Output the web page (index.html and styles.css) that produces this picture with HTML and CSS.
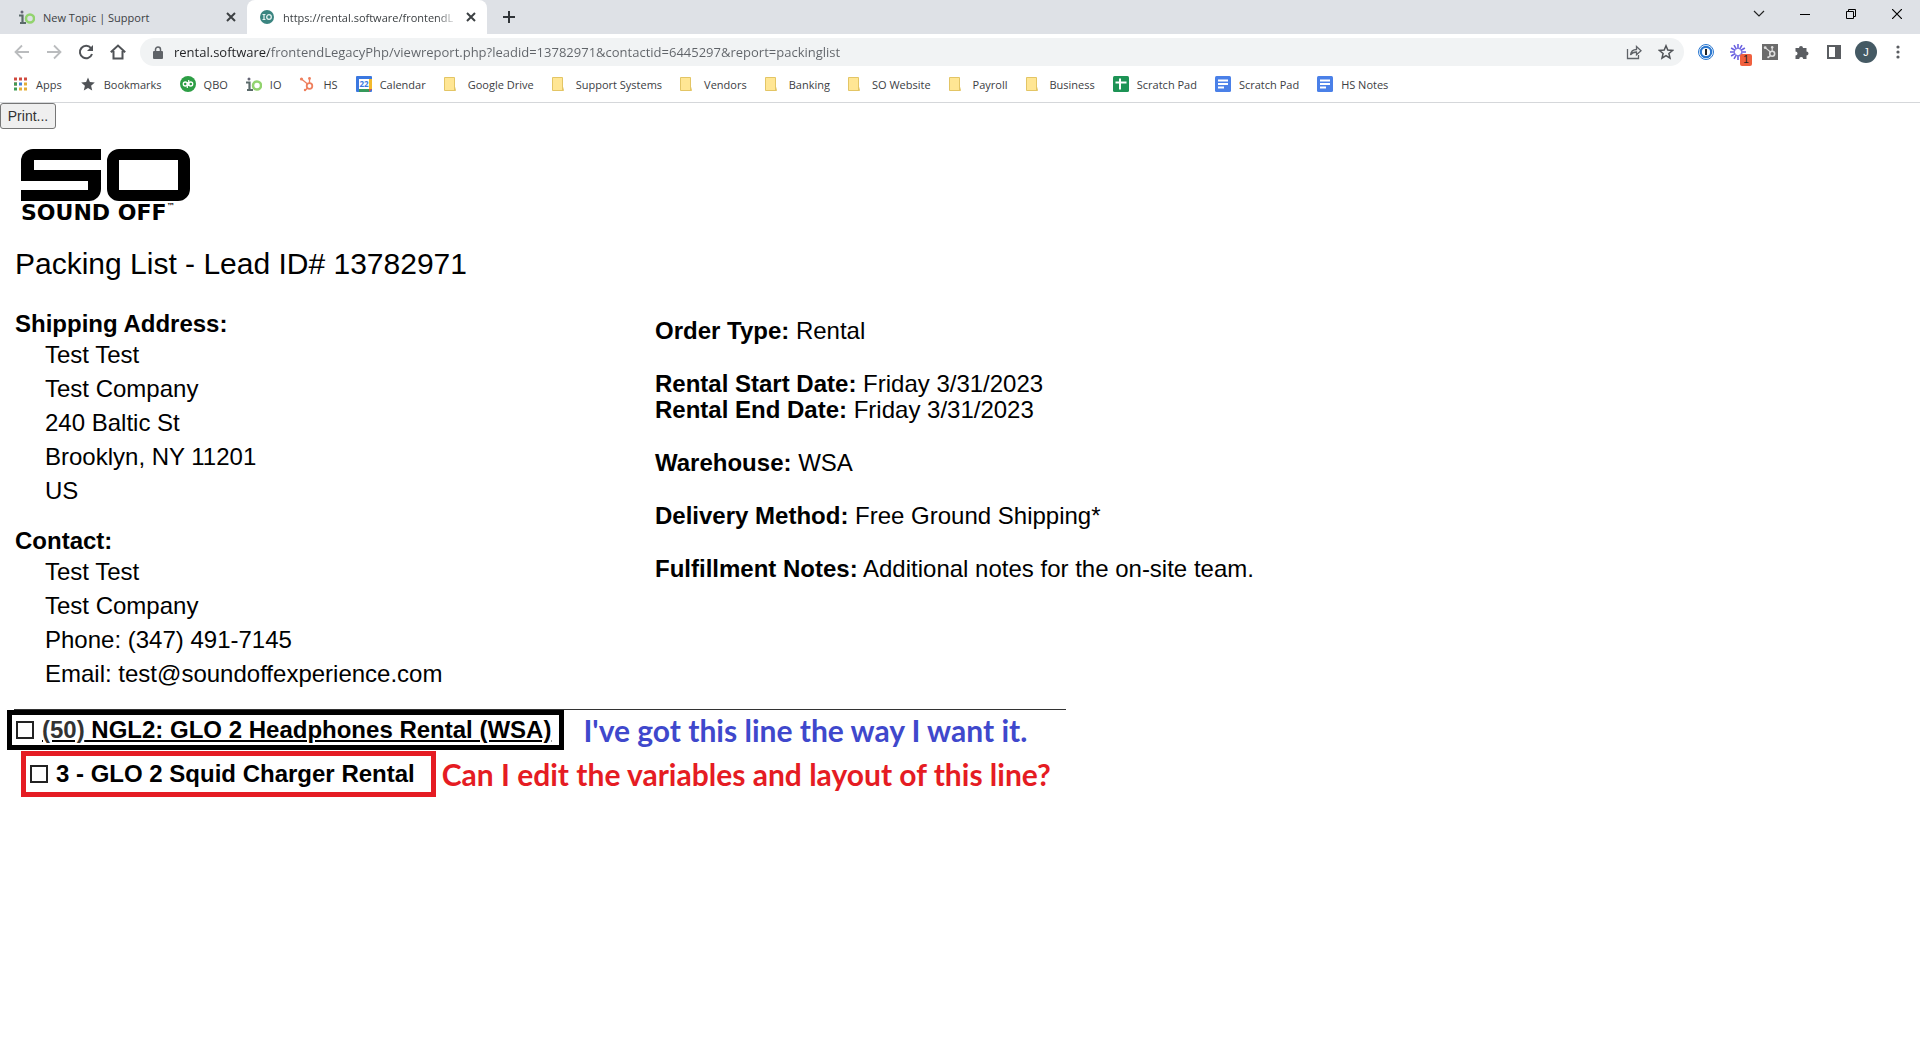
FILE: index.html
```html
<!DOCTYPE html>
<html lang="en">
<head>
    <meta charset="UTF-8">
    <meta name="viewport" content="width=device-width, initial-scale=1.0">
    <title>Packing List</title>
    <link rel="stylesheet" href="styles.css">
</head>
<body>

<!-- Shared icons -->
<svg class="sprite" aria-hidden="true">
    <symbol id="close" viewBox="0 0 10 10"><path d="M1 1l8 8M9 1l-8 8" stroke="#3c4043" stroke-width="2"/></symbol>
    <symbol id="io" viewBox="0 0 16 16">
        <circle cx="3" cy="3" r="1.500" fill="#667"/>
        <path d="M0 6.500h3.500v7.500M1 14h6" fill="none" stroke="#5b6a6a" stroke-width="2.200"/>
        <circle cx="11" cy="9.500" r="4" fill="none" stroke="#92d36e" stroke-width="2.500"/>
    </symbol>
    <symbol id="folder" viewBox="0 0 16 16">
        <path d="M.5 1.500h10v9l1 4H.5z" fill="#ffe694" stroke="#e3c565"/>
        <path d="M10.500 10v4.500" stroke="#e3c565"/>
    </symbol>
    <symbol id="doc" viewBox="0 0 16 16">
        <rect width="16" height="16" rx="1.500" fill="#4a80e8"/>
        <path d="M3 4.500h10M3 8h10M3 11.500h6" stroke="#fff" stroke-width="1.800"/>
    </symbol>
    <symbol id="sprocket" viewBox="0 0 16 16">
        <circle cx="10.500" cy="10" r="2.800" fill="none" stroke="currentColor" stroke-width="1.800"/>
        <path d="M10.500 7V2.500M8.500 8L2.500 3M8.500 12l-2.500 2.500" stroke="currentColor" stroke-width="1.300"/>
        <circle cx="10.500" cy="2.500" r="1.400" fill="currentColor"/>
        <circle cx="2.500" cy="3" r="1.600" fill="currentColor"/>
        <circle cx="6" cy="14" r="1.200" fill="currentColor"/>
    </symbol>
</svg>

<header class="browser">
    <!-- Tabs -->
    <div class="tab-strip">
        <div class="tab">
            <svg class="icon"><use href="#io"/></svg>
            <span class="tab-title">New Topic | Support</span>
            <button class="tab-close" aria-label="Close tab"><svg width="10" height="10"><use href="#close"/></svg></button>
        </div>
        <div class="tab active">
            <svg class="icon" viewBox="0 0 16 16">
                <circle cx="8" cy="8" r="7" fill="#3b8580"/>
                <path d="M3.500 5.500h3M5 5.500v5M3.500 10.500h3" stroke="#e6f3f1" stroke-width="1.200"/>
                <circle cx="10" cy="8" r="2.300" fill="none" stroke="#e6f3f1" stroke-width="1.300"/>
            </svg>
            <span class="tab-title fade">https://rental.software/frontendL</span>
            <button class="tab-close" aria-label="Close tab"><svg width="10" height="10"><use href="#close"/></svg></button>
        </div>
        <button class="new-tab" aria-label="New tab"><svg width="12" height="12" viewBox="0 0 12 12"><path d="M6 0v12M0 6h12" stroke="#303438" stroke-width="2"/></svg></button>
        <div class="window-controls">
            <button aria-label="Search tabs"><svg width="12" height="12" viewBox="0 0 12 12"><path d="M1 3l5 5 5-5" fill="none" stroke="#222" stroke-width="1.200"/></svg></button>
            <button aria-label="Minimize"><svg width="10" height="10" viewBox="0 0 10 10"><path d="M0 5.500h10" stroke="#000"/></svg></button>
            <button aria-label="Restore"><svg width="10" height="10" viewBox="0 0 10 10"><path d="M.5 2.500h7v7h-7zM2.500 2.500v-2h7v7h-2" fill="none" stroke="#000"/></svg></button>
            <button aria-label="Close window"><svg width="10" height="10" viewBox="0 0 10 10"><path d="M0 0l10 10M10 0L0 10" stroke="#000" stroke-width="1.200"/></svg></button>
        </div>
    </div>

    <!-- Address bar -->
    <div class="toolbar">
        <div class="nav">
            <button aria-label="Back"><svg class="icon" viewBox="0 0 16 16"><path d="M15 8H2M8 1.500L1.500 8 8 14.500" fill="none" stroke="#babcbe" stroke-width="1.800"/></svg></button>
            <button aria-label="Forward"><svg class="icon" viewBox="0 0 16 16"><path d="M1 8h13M8 1.500L14.500 8 8 14.500" fill="none" stroke="#babcbe" stroke-width="1.800"/></svg></button>
            <button aria-label="Reload"><svg class="icon" viewBox="0 0 16 16"><path d="M13 4.200A6.200 6.200 0 1 0 14 10" fill="none" stroke="#505357" stroke-width="2"/><path d="M15 1v6H9z" fill="#505357"/></svg></button>
            <button aria-label="Home"><svg class="icon" viewBox="0 0 16 16"><path d="M.8 8.200L8 1.500l7.200 6.700M3.500 7v7.500h9V7" fill="none" stroke="#505357" stroke-width="2"/></svg></button>
        </div>
        <div class="address">
            <svg width="10" height="13" viewBox="0 0 10 13"><rect y="5" width="10" height="8" rx="1" fill="#5f6368"/><path d="M2.500 5.500V3.500a2.500 2.500 0 0 1 5 0v2" fill="none" stroke="#5f6368" stroke-width="1.500"/></svg>
            <input class="url" type="text" aria-label="Address" value="rental.software/frontendLegacyPhp/viewreport.php?leadid=13782971&amp;contactid=6445297&amp;report=packinglist">
            <button aria-label="Share"><svg class="icon" viewBox="0 0 16 16"><path d="M1.500 5v9.500h11V11M4.500 11c.5-4 3-5.500 6-5.500V2.500L15 6.700l-4.500 4V8c-3 0-4.500.8-6 3z" fill="none" stroke="#5f6368" stroke-width="1.300"/></svg></button>
            <button aria-label="Bookmark"><svg class="icon" viewBox="0 0 16 16"><path d="M8 1.800l1.800 4.300 4.700.4-3.600 3 1.100 4.600L8 11.600l-4 2.500 1.100-4.600-3.600-3 4.700-.4z" fill="none" stroke="#505357" stroke-width="1.500"/></svg></button>
        </div>
        <div class="extensions">
            <button aria-label="Password manager"><svg class="icon" viewBox="0 0 16 16"><circle cx="8" cy="8" r="7.500" fill="#fff" stroke="#2b78d0"/><circle cx="8" cy="8" r="5.200" fill="#fff" stroke="#2b78d0" stroke-width="2.200"/><path d="M8 5v6" stroke="#222" stroke-width="2"/></svg></button>
            <button class="has-badge" aria-label="Notifications">
                <svg class="icon" viewBox="0 0 16 16"><path d="M8 0v5M8 11v5M0 8h5M11 8h5M4 1.100l2.500 4.300M9.500 10.600l2.500 4.300M1.100 4l4.300 2.500M10.600 9.500l4.300 2.500M1.100 12l4.300-2.500M10.600 6.500L14.900 4M4 14.900l2.500-4.300M9.500 5.400L12 1.100" stroke="#6b62e0" stroke-width="1.600"/></svg>
                <span class="badge">1</span>
            </button>
            <button class="hubspot" aria-label="HubSpot"><svg class="icon"><rect width="16" height="16" fill="#6b6b6b"/><use href="#sprocket" x="1" y="1" width="14" height="14"/></svg></button>
            <button aria-label="Extensions"><svg class="icon" viewBox="0 0 16 16"><path d="M1.500 4H5a2 2 0 1 1 4 0h3.500v3.500a2 2 0 1 1 0 4V15H9.200a2 2 0 1 0-4 0H1.500v-3.500a2 2 0 1 0 0-4z" fill="#5a5d61"/></svg></button>
            <button aria-label="Side panel"><svg class="icon" viewBox="0 0 16 16"><path d="M2 2h12v12H2z" fill="none" stroke="#5a5d61" stroke-width="2"/><path d="M9 2h5v12H9z" fill="#5a5d61"/></svg></button>
            <button class="avatar" aria-label="Profile">J</button>
            <button aria-label="Menu"><svg class="icon" viewBox="0 0 16 16"><circle cx="8" cy="3" r="1.600" fill="#5a5d61"/><circle cx="8" cy="8" r="1.600" fill="#5a5d61"/><circle cx="8" cy="13" r="1.600" fill="#5a5d61"/></svg></button>
        </div>
    </div>

    <!-- Bookmarks -->
    <nav class="bookmarks">
        <a href="#"><svg class="icon" viewBox="0 0 16 16"><path d="M2 3h3M2 8h3" stroke="#d04a3f" stroke-width="3"/><path d="M7 3h3M12 3h3" stroke="#d04a3f" stroke-width="3"/><path d="M2 8h3M2 13h3" stroke="#3f9b55" stroke-width="3"/><path d="M7 8h3" stroke="#4480d8" stroke-width="3"/><path d="M12 8h3M7 13h3M12 13h3" stroke="#e3ad35" stroke-width="3"/></svg>Apps</a>
        <a href="#"><svg class="icon" viewBox="0 0 16 16"><path d="M8 1.500l1.900 4.600 4.900.4-3.700 3.200 1.100 4.800L8 12l-4.200 2.500 1.100-4.800-3.700-3.200 4.900-.4z" fill="#505357"/></svg>Bookmarks</a>
        <a href="#"><svg class="icon" viewBox="0 0 16 16"><circle cx="8" cy="8" r="8" fill="#2d9e45"/><circle cx="5.300" cy="8" r="2" fill="none" stroke="#fff" stroke-width="1.300"/><circle cx="10.700" cy="8" r="2" fill="none" stroke="#fff" stroke-width="1.300"/><path d="M7.300 6v6M8.700 10V4" stroke="#fff" stroke-width="1.200"/></svg>QBO</a>
        <a href="#"><svg class="icon"><use href="#io"/></svg>IO</a>
        <a href="#"><svg class="icon orange"><use href="#sprocket"/></svg>HS</a>
        <a href="#"><svg class="icon" viewBox="0 0 16 16"><rect width="16" height="16" rx="1" fill="#3b78e0"/><path d="M13 3h3v10h-3z" fill="#f3b92b"/><path d="M3 13h10v3H3z" fill="#36995a"/><path d="M13 13h3l-3 3z" fill="#dd5144"/><path d="M3 3h10v10H3z" fill="#fff"/><text x="8" y="11" text-anchor="middle" class="cal-day">22</text></svg>Calendar</a>
        <a href="#"><svg class="icon"><use href="#folder"/></svg>Google Drive</a>
        <a href="#"><svg class="icon"><use href="#folder"/></svg>Support Systems</a>
        <a href="#"><svg class="icon"><use href="#folder"/></svg>Vendors</a>
        <a href="#"><svg class="icon"><use href="#folder"/></svg>Banking</a>
        <a href="#"><svg class="icon"><use href="#folder"/></svg>SO Website</a>
        <a href="#"><svg class="icon"><use href="#folder"/></svg>Payroll</a>
        <a href="#"><svg class="icon"><use href="#folder"/></svg>Business</a>
        <a href="#"><svg class="icon" viewBox="0 0 16 16"><rect width="16" height="16" rx="1.500" fill="#1d9355"/><path d="M2.500 6.500h11M7 2.500v11" stroke="#fff" stroke-width="2"/></svg>Scratch Pad</a>
        <a href="#"><svg class="icon"><use href="#doc"/></svg>Scratch Pad</a>
        <a href="#"><svg class="icon"><use href="#doc"/></svg>HS Notes</a>
    </nav>
</header>

<main>
    <button class="print-btn">Print...</button>

    <div class="report">
        <div class="logo">
            <div class="logo-mark" role="img" aria-label="SO">
                <div class="logo-s">
                    <div class="s-top"></div>
                    <div class="s-bottom"></div>
                </div>
                <div class="logo-o"></div>
            </div>
            <div class="logo-name">SOUND OFF<small>™</small></div>
        </div>

        <h1>Packing List - Lead ID# 13782971</h1>

        <div class="details">
            <div class="people">
                <section>
                    <h2>Shipping Address:</h2>
                    <p>Test Test</p>
                    <p>Test Company</p>
                    <p>240 Baltic St</p>
                    <p>Brooklyn, NY 11201</p>
                    <p>US</p>
                </section>
                <section>
                    <h2>Contact:</h2>
                    <p>Test Test</p>
                    <p>Test Company</p>
                    <p>Phone: (347) 491-7145</p>
                    <p>Email: test@soundoffexperience.com</p>
                </section>
            </div>
            <div class="order">
                <p><b>Order Type:</b> Rental</p>
                <p><b>Rental Start Date:</b> Friday 3/31/2023<br><b>Rental End Date:</b> Friday 3/31/2023</p>
                <p><b>Warehouse:</b> WSA</p>
                <p><b>Delivery Method:</b> Free Ground Shipping*</p>
                <p><b>Fulfillment Notes:</b> Additional notes for the on-site team.</p>
            </div>
        </div>
    </div>

    <!-- Items to pack -->
    <hr>
    <div class="items">
        <div class="item">
            <div class="item-box black">
                <input type="checkbox" id="item1">
                <label for="item1"><span class="qty">(50)</span> NGL2: GLO 2 Headphones Rental (WSA)</label>
            </div>
            <span class="note blue">I've got this line the way I want it.</span>
        </div>
        <div class="item sub-item">
            <div class="item-box red">
                <input type="checkbox" id="item2">
                <label for="item2">3 - GLO 2 Squid Charger Rental</label>
            </div>
            <span class="note crimson">Can I edit the variables and layout of this line?</span>
        </div>
    </div>
</main>

</body>
</html>
```
FILE: styles.css
```css
* {
    box-sizing: border-box;
}
body {
    margin: 0;
    background: #fff;
    color: #000;
    font-family: "Liberation Sans", Arial, sans-serif;
}
button {
    padding: 0;
    border: 0;
    background: none;
    display: flex;
    align-items: center;
    justify-content: center;
}
.sprite {
    display: none;
}
.icon {
    width: 16px;
    height: 16px;
    flex: none;
}

/* Browser frame */
.browser {
    font-family: "Open Sans", "Segoe UI", sans-serif;
    font-size: 11px;
    color: #3c4043;
    border-bottom: 1px solid #d5d7da;
}
.tab-strip {
    display: flex;
    height: 34px;
    padding-left: 7px;
    background: #dee1e6;
}
.tab {
    display: flex;
    align-items: center;
    width: 240px;
    padding: 0 11px 0 12px;
    gap: 8px;
}
.tab.active {
    background: #fff;
    border-radius: 8px 8px 0 0;
}
.tab-title {
    flex: 1;
    white-space: nowrap;
}
.fade {
    -webkit-mask-image: linear-gradient(to right, #000 88%, transparent);
    mask-image: linear-gradient(to right, #000 88%, transparent);
}
.new-tab {
    width: 44px;
}
.window-controls {
    display: flex;
    margin-left: auto;
    height: 28px;
}
.window-controls button {
    width: 46px;
}
.toolbar {
    display: flex;
    align-items: center;
    height: 36px;
    padding: 0 14px;
}
.nav {
    display: flex;
    gap: 16px;
}
.address {
    flex: 1;
    display: flex;
    align-items: center;
    gap: 16px;
    height: 28px;
    margin: 0 14px;
    padding: 0 10px 0 13px;
    border-radius: 14px;
    background: #f1f3f4;
}
.url {
    flex: 1;
    margin-left: -5px;
    padding: 0;
    border: 0;
    outline: 0;
    font-family: inherit;
    font-size: 13px;
    background: linear-gradient(to right, #202124 95px, #5f6368 95px);
    -webkit-background-clip: text;
    background-clip: text;
    -webkit-text-fill-color: transparent;
}
.extensions {
    display: flex;
    align-items: center;
    gap: 16px;
}
.has-badge {
    position: relative;
}
.badge {
    position: absolute;
    left: 10px;
    top: 10px;
    width: 12px;
    height: 12px;
    border-radius: 2px;
    background: #f0603f;
    color: #222;
    font-size: 10px;
    line-height: 12px;
}
.hubspot {
    color: #ddd;
}
.avatar {
    width: 22px;
    height: 22px;
    margin: 0 -3px;
    border-radius: 50%;
    background: #455a64;
    color: #fff;
    font-size: 11px;
}
.bookmarks {
    display: flex;
    gap: 18px;
    height: 32px;
    padding: 0 12px 4px;
    align-items: center;
}
.bookmarks a {
    display: flex;
    align-items: center;
    gap: 8px;
    color: #3c4043;
    text-decoration: none;
    white-space: nowrap;
}
.orange {
    color: #ee7f5d;
}
.cal-day {
    font-size: 8px;
    font-weight: bold;
    fill: #3b78e0;
}

/* Report */
.print-btn {
    width: 56px;
    height: 26px;
    border: 1px solid #767676;
    border-radius: 3px;
    background: #efefef;
    color: #333;
    font-family: inherit;
    font-size: 14px;
}
.report {
    padding: 20px 15px 0;
}
.logo {
    padding-left: 6px;
}
.logo-mark {
    display: flex;
    gap: 6px;
    height: 52px;
}
.logo-s {
    width: 80px;
}
.s-top,
.s-bottom {
    height: 32px;
    border: 11px solid #000;
}
.s-top {
    border-right: 0;
    border-left-width: 13px;
    border-radius: 12px 0 0 12px;
}
.s-bottom {
    margin-top: -11px;
    height: 31px;
    border-left: 0;
    border-right-width: 13px;
    border-radius: 0 12px 12px 0;
}
.logo-o {
    width: 83px;
    border: 11px solid #000;
    border-left-width: 12px;
    border-right-width: 12px;
    border-radius: 12px;
}
.logo-name {
    display: flex;
    align-items: flex-start;
    font-family: "DejaVu Sans", sans-serif;
    font-size: 22px;
    font-weight: bold;
    line-height: 24px;
}
.logo-name small {
    font-size: 8px;
    line-height: 12px;
}
h1 {
    margin: 22px 0 0;
    font-size: 30px;
    font-weight: normal;
    line-height: 34px;
}
.details {
    display: grid;
    grid-template-columns: 640px auto;
    margin-top: 28px;
    font-size: 24px;
}
.people section {
    margin-bottom: 18px;
}
.details h2 {
    margin: 0;
    font-size: 24px;
    line-height: 29px;
}
.people p {
    margin: 0;
    padding-left: 30px;
    line-height: 34px;
}
.order {
    padding-top: 9px;
}
.order p {
    margin: 0 0 27px;
    line-height: 26px;
}
hr {
    max-width: 1052px;
    margin: 0 14px;
    border: 0;
    border-top: 1px solid #333;
}
.items {
    padding-left: 7px;
}
.item {
    display: flex;
    align-items: center;
    gap: 19px;
    margin-bottom: 1px;
}
.sub-item {
    margin-left: 14px;
    gap: 6px;
}
.item-box {
    display: flex;
    align-items: center;
    gap: 8px;
    height: 40px;
    padding: 0 8px 0 4px;
    font-size: 24px;
    font-weight: bold;
    border: 5px solid #000;
}
.item-box.red {
    height: 46px;
    padding-right: 16px;
    border-color: #e51c23;
}
.item-box input {
    appearance: none;
    width: 18px;
    height: 18px;
    margin: 0;
    border: 2px solid #222;
}
.black label {
    text-decoration: underline;
}
.qty {
    color: #333;
}
.note {
    font-family: Lato, Calibri, sans-serif;
    font-size: 30px;
    font-weight: bold;
    line-height: 36px;
}
.blue {
    color: #3f48cc;
}
.crimson {
    color: #e51c23;
}
```
